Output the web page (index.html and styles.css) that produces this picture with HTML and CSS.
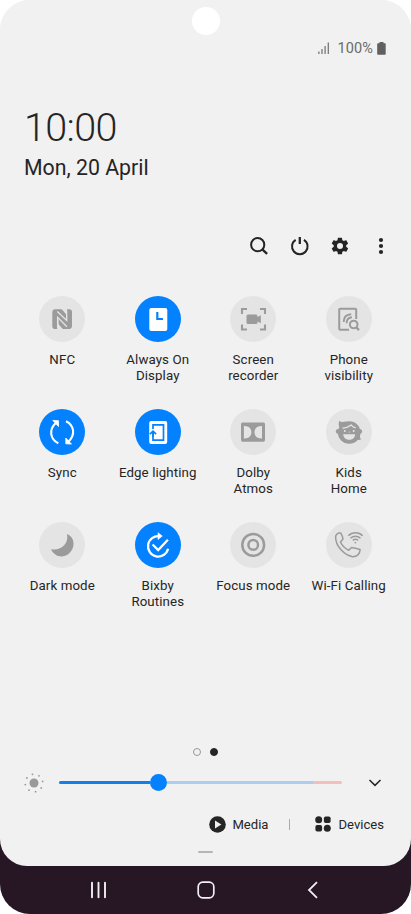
FILE: index.html
```
<!DOCTYPE html>
<html lang="en">
<head>
<meta charset="utf-8">
<title>Quick settings</title>
<link rel="stylesheet" href="styles.css">
</head>
<body>
<div class="phone">
  <main class="panel">
    <div class="camera"></div>
    <div class="status">
      <svg width="12" height="12" viewBox="0 0 12 12" fill="none" stroke="#777"><path d="M.9 9.5V12M4 7v5M7.1 4v8M10.3.5V12" stroke-width="1.3"/></svg>
      <span class="percent">100%</span>
      <svg width="9" height="13" viewBox="0 0 9 13" fill="#606060"><path d="M2.5 0h4v1.3H8q.7 0 .7.7v10q0 .8-.8.8H1q-.8 0-.8-.8V2q0-.7.7-.7h1.6z"/></svg>
    </div>
    <header class="clock">
      <div class="time">10:00</div>
      <div class="date">Mon, 20 April</div>
    </header>
    <nav class="actions">
      <svg width="20" height="20" viewBox="0 0 20 20" fill="none" stroke="#252525" stroke-width="2"><circle cx="8.7" cy="8.7" r="6.6"/><path d="m13.3 13.3 4.8 4.6" stroke-width="2.3"/></svg>
      <svg width="20" height="20" viewBox="0 0 20 20" fill="none" stroke="#252525" stroke-width="2"><path d="M5.700 3.800a7.800 7.800 0 1 0 8.200 0"/><path d="M9.800 1v7" stroke-width="2.300"/></svg>
      <svg width="20" height="20" viewBox="0 0 24 24" fill="#252525"><path d="M19.4 13a7.5 7.5 0 0 0 0-2l2.1-1.7c.2-.1.2-.4.1-.6l-2-3.5c-.1-.2-.4-.3-.6-.2l-2.5 1a7.3 7.3 0 0 0-1.7-1l-.4-2.6a.5.5 0 0 0-.5-.4h-4a.5.5 0 0 0-.5.4L9 5a7.3 7.3 0 0 0-1.700 1l-2.500-1c-.2-.1-.5 0-.6.2l-2 3.500c-.1.2-.1.5.1.6L4.500 11a7.500 7.500 0 0 0 0 2l-2.200 1.700c-.2.1-.2.4-.1.6l2 3.500c.1.2.4.3.6.2l2.500-1c.5.4 1.100.7 1.700 1l.4 2.600c0 .2.200.4.500.4h4c.300 0 .500-.200.500-.400l.400-2.600c.600-.300 1.200-.600 1.700-1l2.500 1c.200.100.500 0 .600-.200l2-3.500c.100-.200.100-.500-.100-.600zM12 15.600a3.600 3.600 0 1 1 0-7.200 3.600 3.600 0 0 1 0 7.200z"/></svg>
      <svg width="20" height="20" viewBox="0 0 20 20" fill="#252525"><circle cx="10" cy="4" r="2.100"/><circle cx="10" cy="10" r="2.100"/><circle cx="10" cy="16" r="2.100"/></svg>
    </nav>
    <section class="tiles">
      <div class="tile"><svg class="icon" viewBox="0 0 46 46"><path fill="#9b9b9b" d="M16.300 13.300h2.500L28 23.500V13.300h2.200q2.800 0 2.800 2.800v14q0 2.800-2.800 2.800h-2.700L18.500 23v10h-2.200q-3 0-3-2.800v-14q0-2.900 3-2.900z"/><path fill="#9b9b9b" d="M18.500 13.300H22q1 .2 1.700 1l3.300 4v6l-8.500-9zM28 32.900h-3.500q-1-.2-1.700-1l-3.300-4v-6l8.500 9z"/><path d="M18.300 15.500l9.400 9V15.200q0-1.200-.8-2.100M27.900 30.700l-9.300-9.300V31q0 1.200.8 2.100" fill="none" stroke="#e4e4e4" stroke-width="1.300"/></svg><span>NFC</span></div>
      <div class="tile on"><svg class="icon" viewBox="0 0 46 46"><rect x="14.300" y="12" width="18" height="23" rx="2" fill="#fff"/><path d="M22.300 16v7h5.700" fill="none" stroke="#0381fe" stroke-width="2.200"/></svg><span>Always On<br>Display</span></div>
      <div class="tile"><svg class="icon" viewBox="0 0 46 46"><path d="M17 13h-5v5M30 13h5v5M12 28.500v5h5M35 28.500v5h-5" fill="none" stroke="#9b9b9b" stroke-width="2.100"/><rect x="16.500" y="18.500" width="11" height="9.500" rx="1.500" fill="#9b9b9b"/><path d="m26 22 4.800-2.700v8L26 24.800z" fill="#9b9b9b"/></svg><span>Screen<br>recorder</span></div>
      <div class="tile"><svg class="icon" viewBox="0 0 46 46" fill="none" stroke="#9b9b9b" stroke-width="2"><path d="M23 33.800h-8.800q-1 0-1-1V13.700q0-1 1-1h15q1 0 1 1V23"/><path d="M17.700 26q0-7.500 7.500-7.800M20.600 27.200q0-5.500 5.300-5.900" stroke-width="1.900"/><circle cx="27.700" cy="28.500" r="3.800"/><path d="m30.500 31.500 2.500 2.600" stroke-width="2.300"/></svg><span>Phone<br>visibility</span></div>

      <div class="tile on"><svg class="icon" viewBox="0 0 46 46" fill="none" stroke="#fff" stroke-width="2.100"><path d="M19.300 34.200c-8.200-4-9.800-13.500-2.300-20.500M27 12.200c8.200 4 9.800 13.500 2.300 20.500"/><path d="m13.800 11.400 5.700.3v5.800zM32.500 35.100l-5.700-.3V29z" fill="#fff" stroke-width=".8"/></svg><span>Sync</span></div>
      <div class="tile on"><svg class="icon" viewBox="0 0 46 46"><rect x="14.200" y="12" width="18" height="23" rx="2" fill="#fff"/><path d="M18 20v-4.200h10.500v15.400H18v-7.500" fill="none" stroke="#0381fe" stroke-width="1.700"/><path d="m14.900 25.100 3.100-3 3.100 3M18 23v5" fill="none" stroke="#0381fe" stroke-width="1.700"/></svg><span>Edge lighting</span></div>
      <div class="tile"><svg class="icon" viewBox="0 0 46 46"><path fill="#9b9b9b" fill-rule="evenodd" d="M12.500 13.500h21q1.500 0 1.500 1.500v16q0 1.800-1.500 1.800h-21q-1.500 0-1.500-1.800V15q0-1.500 1.500-1.500zM13.900 17v12.500c4.800.3 7.500-2.500 7.500-6.200S18.700 16.700 13.900 17zM32 17c-4.800-.3-7.500 2.600-7.500 6.300s2.700 6.500 7.500 6.200z"/></svg><span>Dolby<br>Atmos</span></div>
      <div class="tile"><svg class="icon" viewBox="0 0 46 46"><g fill="#9b9b9b"><circle cx="23.200" cy="23.500" r="11.300"/><circle cx="12.200" cy="22.500" r="2.400"/><circle cx="33.700" cy="22.500" r="2.400"/><path d="M13.200 12.100c2 1.400 4.300 1 7 .5l-3 6h-3.500c-1.300-2-1.200-4-.5-6.500zM34 24l-.2 3.800q.3 1.700 1.500 2.500-3 1.500-5.800-.5z"/></g><path d="M16.500 19.200c3.500.1 6-1.400 8.700-3.200 1 1.600 2.500 2.400 4.500 2.900" fill="none" stroke="#e4e4e4" stroke-width="1.300"/><path d="M17.200 25.300h12c-.3 3.400-2.400 5.500-6 5.500s-5.700-2.100-6-5.500z" fill="#e4e4e4"/><g fill="#e4e4e4"><circle cx="18.800" cy="22" r="1"/><circle cx="27.700" cy="22" r="1"/><circle cx="23.200" cy="23" r=".6"/></g></svg><span>Kids<br>Home</span></div>

      <div class="tile"><svg class="icon" viewBox="0 0 46 46"><path fill="#9b9b9b" d="M28 12c8 3 9 14 1.500 20-5.700 4.500-14.500 2.500-17.500-4.800 10 1.700 18-5.200 16-15.200z"/></svg><span>Dark mode</span></div>
      <div class="tile on"><svg class="icon" viewBox="0 0 46 46" fill="none" stroke="#fff" stroke-width="2.300"><path d="M24.500 14.200a10.200 10.200 0 1 0 8.600 12.600"/><path d="M23 10.700v6.800l4.300-3.400z" fill="#fff" stroke-width=".6"/><path d="m17.600 22.500 5.600 5.500 9.700-10.300"/></svg><span>Bixby<br>Routines</span></div>
      <div class="tile"><svg class="icon" viewBox="0 0 46 46" fill="none" stroke="#9b9b9b" stroke-width="2.500"><circle cx="23.200" cy="22.900" r="10.900"/><circle cx="23.200" cy="22.900" r="4.800"/></svg><span>Focus mode</span></div>
      <div class="tile"><svg class="icon" viewBox="0 0 46 46" fill="none" stroke="#9b9b9b" stroke-width="1.500" stroke-linejoin="round"><path d="M12.500 11.100h2.300c1 1.600 1.900 3.500 2.200 5.900l-2.500 3c1.700 4 4.500 6.500 8.300 8.300l2.700-2.800c3 .3 5.500 1 8.600 2-.2 4.200-2.800 7.200-7.500 7.300C18.500 33 9.500 24.500 9.600 15c0-2 1.300-3.200 2.900-3.900z"/><path d="M22.300 13.700c4-4 10.500-4 14.300 0M24.400 16.200c3-2.700 7.200-2.700 10.100 0M26.800 18.400c1.600-1.300 3.700-1.300 5.300 0"/><circle cx="29.400" cy="20.600" r=".9" fill="#9b9b9b" stroke="none"/></svg><span>Wi-Fi Calling</span></div>
    </section>
    <div class="pages"><i class="page"></i><i class="page current"></i></div>
    <div class="brightness">
      <svg width="20" height="20" viewBox="0 0 20 20" fill="#999"><circle cx="10" cy="10" r="4.500"/><g class="rays"><circle cx="8.500" cy="1.300" r=".9"/><circle cx="15" cy="2.800" r=".9"/><circle cx="18.600" cy="8.400" r=".9"/><circle cx="17.200" cy="14.900" r=".9"/><circle cx="11.600" cy="18.700" r=".9"/><circle cx="5" cy="17.200" r=".9"/><circle cx="1.300" cy="11.600" r=".9"/><circle cx="2.900" cy="5" r=".9"/></g></svg>
      <div class="slider"><div class="filled"></div><div class="knob"></div><div class="rest"></div><div class="hot"></div></div>
      <svg width="14" height="8" viewBox="0 0 14 8" fill="none" stroke="#252525" stroke-width="1.500"><path d="m1.500 1 5.500 5.400L12.500 1"/></svg>
    </div>
    <div class="shortcuts">
      <svg width="17" height="17" viewBox="0 0 17 17"><circle cx="8.500" cy="8.500" r="8.300" fill="#252525"/><path d="m6 4.600 6.400 3.900L6 12.400z" fill="#f1f1f1"/></svg>
      <span class="media">Media</span>
      <i class="divider"></i>
      <svg width="16" height="16" viewBox="0 0 16 16" fill="#252525"><circle cx="3.700" cy="3.700" r="3.500"/><rect x="8.900" y=".4" width="6.700" height="6.700" rx="1.800"/><rect x=".4" y="8.900" width="6.700" height="6.700" rx="1.800"/><circle cx="12.300" cy="12.300" r="3.500"/></svg>
      <span class="devices">Devices</span>
    </div>
    <div class="handle"></div>
  </main>
  <nav class="navbar">
    <svg width="18" height="18" viewBox="0 0 18 18" stroke="#f2eef2" stroke-width="1.900" stroke-linecap="round"><path d="M2 1.700v14.600M8.500 1.700v14.600M15 1.700v14.600"/></svg>
    <svg width="18" height="18" viewBox="0 0 18 18" fill="none" stroke="#f2eef2" stroke-width="1.700"><rect x="1.200" y="1.200" width="15.600" height="15.600" rx="4.500"/></svg>
    <svg width="18" height="18" viewBox="0 0 18 18" fill="none" stroke="#f2eef2" stroke-width="1.800"><path d="M13 1.200 5 9l8 7.800"/></svg>
  </nav>
</div>
</body>
</html>
```
FILE: styles.css
```
* { box-sizing: border-box; }
body { margin: 0; background: #fff; font-family: Roboto, sans-serif; color: #252525; }
svg { display: block; flex: none; }
.phone { width: 411px; height: 914px; background: linear-gradient(#f1f1f1 800px, #271725 800px); border-radius: 30px; overflow: hidden; }
.panel { height: 866px; background: #f1f1f1; border-radius: 0 0 27px 27px; display: flex; flex-direction: column; }
.camera { width: 28px; height: 28px; border-radius: 50%; background: #fff; margin: 7px auto 0; flex: none; }
.status { height: 26px; flex: none; display: flex; align-items: center; justify-content: flex-end; padding-right: 25px; font-size: 14.5px; color: #6b6b6b; }
.percent { margin: 0 4px 0 8px; letter-spacing: 0.1px; }
.clock { height: 158px; flex: none; padding: 44px 0 0 24px; }
.time { font-size: 39.5px; font-weight: 300; line-height: 46px; letter-spacing: -0.6px; }
.date { font-size: 21.300px; line-height: 26px; margin-top: 4px; white-space: nowrap; }
.actions { height: 54px; flex: none; display: flex; align-items: center; justify-content: flex-end; gap: 20.700px; padding-right: 20px; }
.tiles { height: 439px; flex: none; margin: 0 14.500px; padding-top: 23px; display: grid; grid-template-columns: repeat(4, 1fr); grid-auto-rows: 113.200px; align-content: start; }
.tile { display: flex; flex-direction: column; align-items: center; text-align: center; font-size: 13.300px; line-height: 16px; letter-spacing: 0.100px; white-space: nowrap; }
.icon { width: 46px; height: 46px; border-radius: 50%; background: #e4e4e4; margin-bottom: 10px; }
.on .icon { background: #0381fe; }
.pages { display: flex; justify-content: center; align-items: center; gap: 9px; height: 36px; margin-top: 22px; flex: none; }
.page { width: 8px; height: 8px; border-radius: 50%; border: 1.500px solid #999; }
.current { background: #252525; border-color: #252525; }
.brightness { display: flex; align-items: center; height: 26px; flex: none; padding: 0 29px 0 24px; }
.slider { display: flex; align-items: center; width: 283px; margin: -1px 26px 0 15px; }
.filled { flex: 91; height: 3px; border-radius: 2px 0 0 2px; background: #147fe8; }
.knob { width: 17px; height: 17px; border-radius: 50%; background: #0381fe; }
.rest { flex: 146; height: 3px; background: #accdf0; }
.hot { flex: 29; height: 3px; background: #f3bfbd; border-radius: 0 2px 2px 0; }
.shortcuts { display: flex; align-items: center; justify-content: flex-end; height: 56px; flex: none; padding-right: 27px; font-size: 13.100px; }
.media { margin-left: 7px; }
.divider { width: 1px; height: 11px; background: #aaa; margin: 0 25px 0 21px; }
.devices { margin-left: 7px; }
.shortcuts svg:first-child { margin-right: -1px; }
.handle { width: 15px; height: 2px; background: #b5b5b5; border-radius: 1px; margin: -1px auto 0; }
.navbar { height: 48px; display: flex; align-items: center; justify-content: center; gap: 89px; }
```
